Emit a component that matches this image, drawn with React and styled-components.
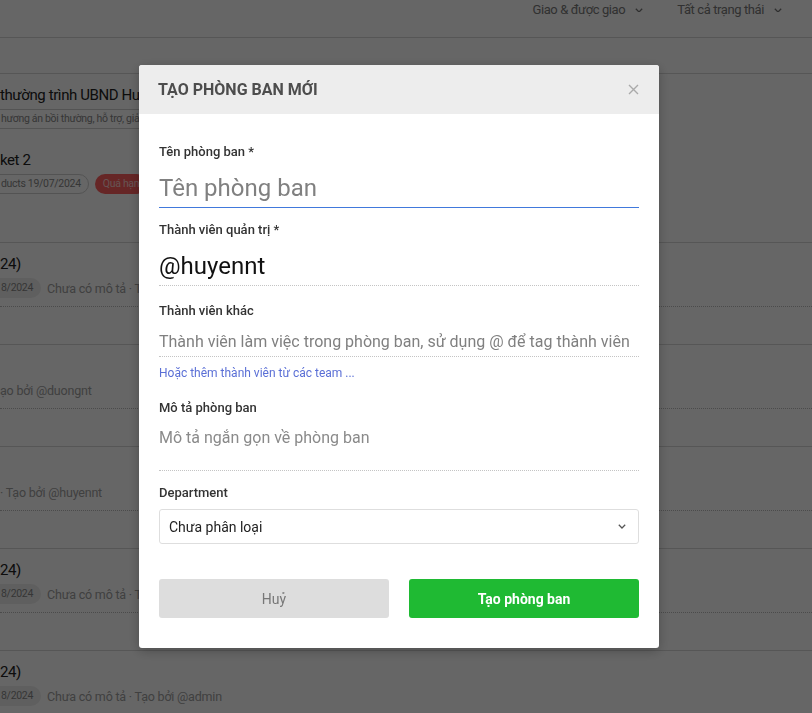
import React from "react";
import styled, { createGlobalStyle } from "styled-components";

const GlobalStyle = createGlobalStyle`
  html, body {
    margin: 0;
    padding: 0;
    background: #fff;
    font-family: Roboto, "Noto Sans", "Liberation Sans", sans-serif;
    overflow: hidden;
  }
  * { box-sizing: border-box; }
`;

const Page = styled.div`
  width: 812px;
  height: 713px;
  overflow: hidden;
`;

const TopBar = styled.div`
  height: 38px;
  display: flex;
  justify-content: flex-end;
  align-items: flex-start;
  gap: 34px;
  padding: 2px 30px 0 0;
  border-bottom: 1px solid #d8d8d8;
`;

const Filter = styled.div`
  display: flex;
  align-items: center;
  gap: 10px;
  font-size: 13px;
  letter-spacing: -0.4px;
  line-height: 16px;
  color: #7a7a7a;
`;

const SubBar = styled.div`
  height: 36px;
  border-bottom: 1px solid #d8d8d8;
`;

const Row = styled.div`
  height: ${(p) => p.$h || 102}px;
  border-bottom: 1px solid #d8d8d8;
  padding-top: 11px;
`;

const Item = styled.div`
  height: ${(p) => p.$h || 53}px;
  border-bottom: ${(p) => (p.$dotted ? "1px dotted #bbb" : "none")};
`;

const Title = styled.div`
  font-size: 15px;
  letter-spacing: -0.4px;
  line-height: 20px;
  height: 20px;
  color: #222;
  white-space: nowrap;
`;

const Meta = styled.div`
  display: flex;
  align-items: center;
  gap: 6px;
  margin-top: 4px;
  height: 20px;
  white-space: nowrap;
  font-size: 12.5px;
  letter-spacing: -0.2px;
  color: #a0a0a0;
`;

const Pill = styled.span`
  display: inline-block;
  margin-left: ${(p) => (p.$cut ? "-12px" : "0")};
  padding: 2px 7px 2px ${(p) => (p.$cut ? "12px" : "7px")};
  border-radius: 10px;
  font-size: 10.5px;
  letter-spacing: -0.3px;
  line-height: 14px;
  border: 1px solid ${(p) => (p.$outline ? "#d0d0d0" : "transparent")};
  background: ${(p) => p.$bg || "transparent"};
  color: ${(p) => p.$color || "#888"};
`;

const Overlay = styled.div`
  position: fixed;
  inset: 0;
  background: rgba(0, 0, 0, 0.6);
  display: flex;
  justify-content: center;
  align-items: flex-start;
  padding: 65px 14px 0 0;
`;

const Modal = styled.div`
  width: 520px;
  background: #fff;
  border-radius: 3px;
  overflow: hidden;
  box-shadow: 0 3px 12px rgba(0, 0, 0, 0.25);
`;

const ModalHeader = styled.div`
  height: 49px;
  background: #ededed;
  display: flex;
  align-items: center;
  justify-content: space-between;
  padding: 0 19px 0 19px;
`;

const ModalTitle = styled.h2`
  margin: 0;
  font-size: 16px;
  font-weight: 700;
  color: #4d4d4d;
`;

const CloseButton = styled.button`
  border: none;
  background: transparent;
  padding: 0;
  width: 14px;
  height: 14px;
  display: flex;
  align-items: center;
  justify-content: center;
  cursor: pointer;
`;

const ModalBody = styled.div`
  padding: 30px 20px 30px 20px;
`;

const Field = styled.div`
  margin-bottom: ${(p) => p.$mb ?? 14}px;
`;

const Label = styled.label`
  display: block;
  font-size: 13px;
  line-height: 16px;
  font-weight: 500;
  color: #333;
  margin-bottom: ${(p) => p.$mb ?? 8}px;
`;

const InputLine = styled.div`
  border-bottom: 1px ${(p) => (p.$active ? "solid" : "dotted")}
    ${(p) => (p.$active ? "#4179dc" : "#c4c4c4")};
`;

const TextInput = styled.input`
  display: block;
  width: 100%;
  height: ${(p) => p.$h}px;
  border: 0;
  outline: none;
  padding: 0;
  font-family: inherit;
  font-size: ${(p) => p.$size}px;
  color: #111;
  background: transparent;
  &::placeholder {
    color: #808080;
  }
`;

const TextArea = styled.textarea`
  display: block;
  width: 100%;
  height: 47px;
  border: none;
  border-bottom: 1px dotted #c4c4c4;
  outline: none;
  resize: none;
  padding: 4px 0 0 0;
  font-family: inherit;
  font-size: 16px;
  line-height: 19px;
  &::placeholder {
    color: #8a8a8a;
  }
`;

const TeamLink = styled.a`
  display: block;
  margin: 9px 0 19px;
  font-size: 12px;
  line-height: 15px;
  color: #5a6fd6;
  text-decoration: none;
`;

const Select = styled.div`
  height: 35px;
  border: 1px solid #dedede;
  border-radius: 3px;
  display: flex;
  align-items: center;
  justify-content: space-between;
  padding: 0 12px 0 9px;
  font-size: 14px;
  color: #222;
`;

const Actions = styled.div`
  display: grid;
  grid-template-columns: 1fr 1fr;
  gap: 20px;
  margin-top: 35px;
`;

const Button = styled.button`
  height: 39px;
  border: none;
  border-radius: 3px;
  font-family: inherit;
  font-size: 14px;
  font-weight: ${(p) => (p.$primary ? 700 : 400)};
  background: ${(p) => (p.$primary ? "#1fba33" : "#dddddd")};
  color: ${(p) => (p.$primary ? "#fff" : "#777")};
  cursor: pointer;
`;

const Chevron = ({ color = "#777", size = 8 }) => (
  <svg width={size} height={size * 0.6} viewBox="0 0 10 6" fill="none">
    <path d="M1 1l4 4 4-4" stroke={color} strokeWidth="1.6" />
  </svg>
);

export default function App() {
  return (
    <Page>
      <GlobalStyle />
      <TopBar>
        <Filter>
          Giao &amp; được giao <Chevron />
        </Filter>
        <Filter>
          Tất cả trạng thái <Chevron />
        </Filter>
      </TopBar>
      <SubBar />

      <Row $h={169}>
        <Item $h={65}>
          <Title>thường trình UBND Huyện</Title>
          <Meta>
            <Pill $cut $outline>
              hương án bồi thường, hỗ trợ, giải phóng
            </Pill>
          </Meta>
        </Item>
        <Item $h={65}>
          <Title>ket 2</Title>
          <Meta>
            <Pill $cut $outline>
              ducts 19/07/2024
            </Pill>
            <Pill $bg="#ff6060" $color="#ffd0d0">
              Quá hạn
            </Pill>
          </Meta>
        </Item>
      </Row>

      <Row>
        <Item $dotted>
          <Title>24)</Title>
          <Meta>
            <Pill $cut $bg="#eeeeee">8/2024</Pill>
            <span>Chưa có mô tả · Tạo bởi</span>
          </Meta>
        </Item>
      </Row>

      <Row>
        <Item $dotted>
          <Title />
          <Meta>
            <span>ạo bởi @duongnt</span>
          </Meta>
        </Item>
      </Row>

      <Row>
        <Item $dotted>
          <Title />
          <Meta>
            <span>· Tạo bởi @huyennt</span>
          </Meta>
        </Item>
      </Row>

      <Row>
        <Item $dotted>
          <Title>24)</Title>
          <Meta>
            <Pill $cut $bg="#eeeeee">8/2024</Pill>
            <span>Chưa có mô tả · Tạo bởi</span>
          </Meta>
        </Item>
      </Row>

      <Row>
        <Item $dotted>
          <Title>24)</Title>
          <Meta>
            <Pill $cut $bg="#eeeeee">8/2024</Pill>
            <span>Chưa có mô tả · Tạo bởi @admin</span>
          </Meta>
        </Item>
      </Row>

      <Overlay>
        <Modal>
          <ModalHeader>
            <ModalTitle>TẠO PHÒNG BAN MỚI</ModalTitle>
            <CloseButton aria-label="Đóng">
              <svg width="11" height="11" viewBox="0 0 11 11">
                <path
                  d="M1 1l9 9M10 1l-9 9"
                  stroke="#aaa"
                  strokeWidth="1.4"
                />
              </svg>
            </CloseButton>
          </ModalHeader>
          <ModalBody>
            <Field>
              <Label>Tên phòng ban *</Label>
              <InputLine $active>
                <TextInput $h={39} $size={24} placeholder="Tên phòng ban" />
              </InputLine>
            </Field>
            <Field $mb={17}>
              <Label>Thành viên quản trị *</Label>
              <InputLine>
                <TextInput $h={39} $size={24} defaultValue="@huyennt" />
              </InputLine>
            </Field>
            <Field $mb={0}>
              <Label>Thành viên khác</Label>
              <InputLine>
                <TextInput
                  $h={29}
                  $size={16}
                  placeholder="Thành viên làm việc trong phòng ban, sử dụng @ để tag thành viên"
                />
              </InputLine>
            </Field>
            <TeamLink href="#">Hoặc thêm thành viên từ các team ...</TeamLink>
            <Field>
              <Label>Mô tả phòng ban</Label>
              <TextArea placeholder="Mô tả ngắn gọn về phòng ban" />
            </Field>
            <Field $mb={0}>
              <Label $mb={8}>Department</Label>
              <Select>
                Chưa phân loại
                <Chevron color="#555" size={8} />
              </Select>
            </Field>
            <Actions>
              <Button>Huỷ</Button>
              <Button $primary>Tạo phòng ban</Button>
            </Actions>
          </ModalBody>
        </Modal>
      </Overlay>
    </Page>
  );
}
